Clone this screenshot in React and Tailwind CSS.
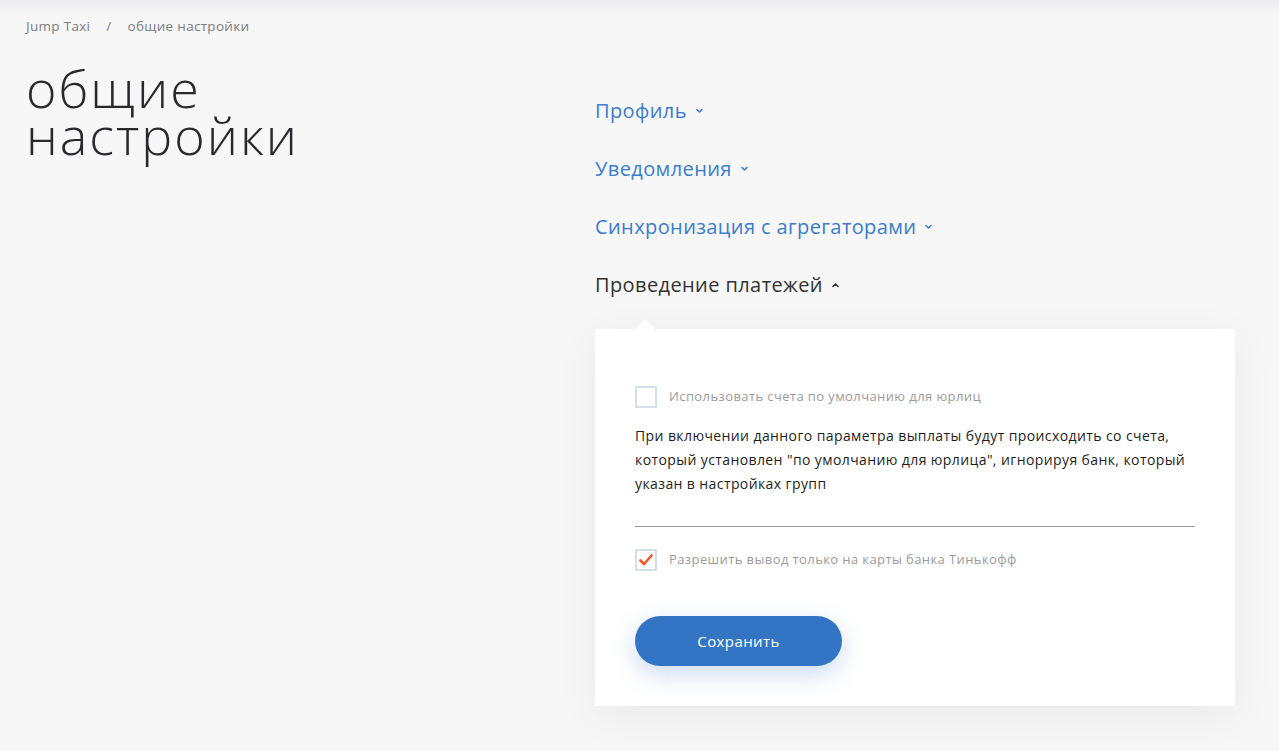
import React from "react";

function Check() {
  return (
    <svg width="14" height="12" viewBox="0 0 14 12" fill="none">
      <path d="M1.5 6.5 L5 10 L12.5 1.5" stroke="#f15a24" strokeWidth="2.6" strokeLinecap="round" strokeLinejoin="round" />
    </svg>
  );
}

function Chevron({ up, color }) {
  return (
    <svg width="9" height="6" viewBox="0 0 9 6" fill="none" className="ml-[8px]">
      <path d={up ? "M2 4.5 L4.5 2 L7 4.5" : "M2 1.5 L4.5 4 L7 1.5"} stroke={color} strokeWidth="1.6" strokeLinecap="round" strokeLinejoin="round" />
    </svg>
  );
}

export default function App() {
  const font = { fontFamily: "'Open Sans', 'Noto Sans', sans-serif" };
  return (
    <div className="min-h-[751px] w-full bg-[#f7f7f8] relative" style={font}>
      <div className="absolute inset-x-0 top-0 h-[14px] bg-gradient-to-b from-[#ececee] to-[#f7f7f8]" />
      <div className="relative flex">
        <div className="w-[595px] shrink-0 pl-[26px] pt-[17px]">
          <div className="flex text-[13.5px] tracking-[0.3px] text-[#7c7c7c] leading-[18px]">
            <span>Jump Taxi</span>
            <span className="mx-[16px]">/</span>
            <span>общие настройки</span>
          </div>
          <h1 className="mt-[29px] text-[52px] leading-[47px] tracking-[2px] font-light text-[#28282d]">
            общие<br />настройки
          </h1>
        </div>
        <div className="pt-[97px] flex flex-col">
          <div className="flex flex-col gap-[30px] text-[20px] leading-[28px] tracking-[0.4px]">
            <div className="flex items-center text-[#3a7cd0]">Профиль<Chevron color="#3a7cd0" /></div>
            <div className="flex items-center text-[#3a7cd0]">Уведомления<Chevron color="#3a7cd0" /></div>
            <div className="flex items-center text-[#3a7cd0]">Синхронизация с агрегаторами<Chevron color="#3a7cd0" /></div>
            <div className="flex items-center text-[#333]">Проведение платежей<Chevron up color="#333" /></div>
          </div>
          <div className="relative mt-[30px] w-[640px] bg-white shadow-[0_10px_40px_rgba(0,0,0,0.06)] px-[40px] pt-[57px] pb-[40px]">
            <div className="absolute left-[40px] -top-[10px] w-0 h-0 border-l-[10px] border-r-[10px] border-b-[10px] border-l-transparent border-r-transparent border-b-white" />
            <label className="flex items-center">
              <span className="w-[22px] h-[22px] border-2 border-[#d3e0e8] bg-white shrink-0" />
              <span className="ml-[12px] text-[13px] tracking-[0.4px] text-[#9b9b9b]">Использовать счета по умолчанию для юрлиц</span>
            </label>
            <p className="mt-[16px] text-[14px] leading-[24px] tracking-[0.4px] text-[#1e1e1e]">
              При включении данного параметра выплаты будут происходить со счета, который установлен "по умолчанию для юрлица", игнорируя банк, который указан в настройках групп
            </p>
            <div className="mt-[30px] h-px bg-[#9a9a9a]" />
            <label className="mt-[22px] flex items-center">
              <span className="w-[22px] h-[22px] border-2 border-[#d3e0e8] bg-white shrink-0 flex items-center justify-center"><Check /></span>
              <span className="ml-[12px] text-[13px] tracking-[0.4px] text-[#9b9b9b]">Разрешить вывод только на карты банка Тинькофф</span>
            </label>
            <button className="mt-[45px] w-[207px] h-[50px] rounded-full bg-[#3375c4] text-white text-[15px] tracking-[0.4px] shadow-[0_8px_24px_rgba(51,117,196,0.25)]">
              Сохранить
            </button>
          </div>
        </div>
      </div>
    </div>
  );
}
